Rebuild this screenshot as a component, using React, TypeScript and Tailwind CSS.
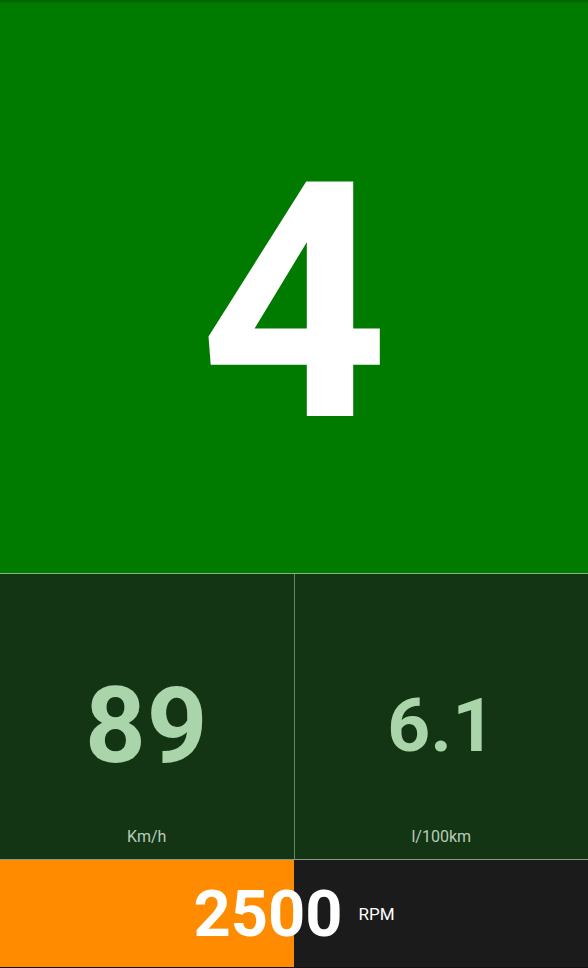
const font = { fontFamily: "Roboto, 'Liberation Sans', sans-serif" };

function Stat({ value, unit, size }: { value: string; unit: string; size: string }) {
  return (
    <div className="relative flex flex-1 flex-col items-center bg-[#133513]">
      <div className="flex flex-1 items-center justify-center pt-[52px]">
        <span className={`font-bold leading-none text-[#aad4aa] ${size}`}>{value}</span>
      </div>
      <span className="pb-[10px] text-[16px] text-[#b9ccb9]">{unit}</span>
    </div>
  );
}

export default function App() {
  const rpm = 2500;
  const maxRpm = 5000;
  return (
    <div className="flex h-[968px] w-[588px] flex-col overflow-hidden bg-black" style={font}>
      <div className="relative flex h-[573px] items-center justify-center bg-[#007b00]">
        <div className="absolute inset-x-0 top-0 h-[4px] bg-gradient-to-b from-[#005f00] to-[#007b00]" />
        <span className="mt-[34px] text-[330px] font-bold leading-none text-white">4</span>
      </div>
      <div className="h-px bg-[#7fb87f]" />
      <div className="flex h-[285px]">
        <Stat value="89" unit="Km/h" size="text-[106px] tracking-[1px]" />
        <div className="w-px bg-[#5f8a5f]" />
        <Stat value="6.1" unit="l/100km" size="text-[75px]" />
      </div>
      <div className="h-px bg-[#8a9a8a]" />
      <div className="relative flex h-[107px] items-center justify-center bg-[#1b1b1b]">
        <div className="absolute inset-y-0 left-0 bg-[#ff8c00]" style={{ width: `${(rpm / maxRpm) * 100}%` }} />
        <div className="relative flex items-center gap-[16px] pt-[2px]">
          <span className="text-[65px] font-bold leading-none text-white">{rpm}</span>
          <span className="text-[17px] text-white">RPM</span>
        </div>
      </div>
      <div className="h-[1px] bg-[#111]" />
    </div>
  );
}
